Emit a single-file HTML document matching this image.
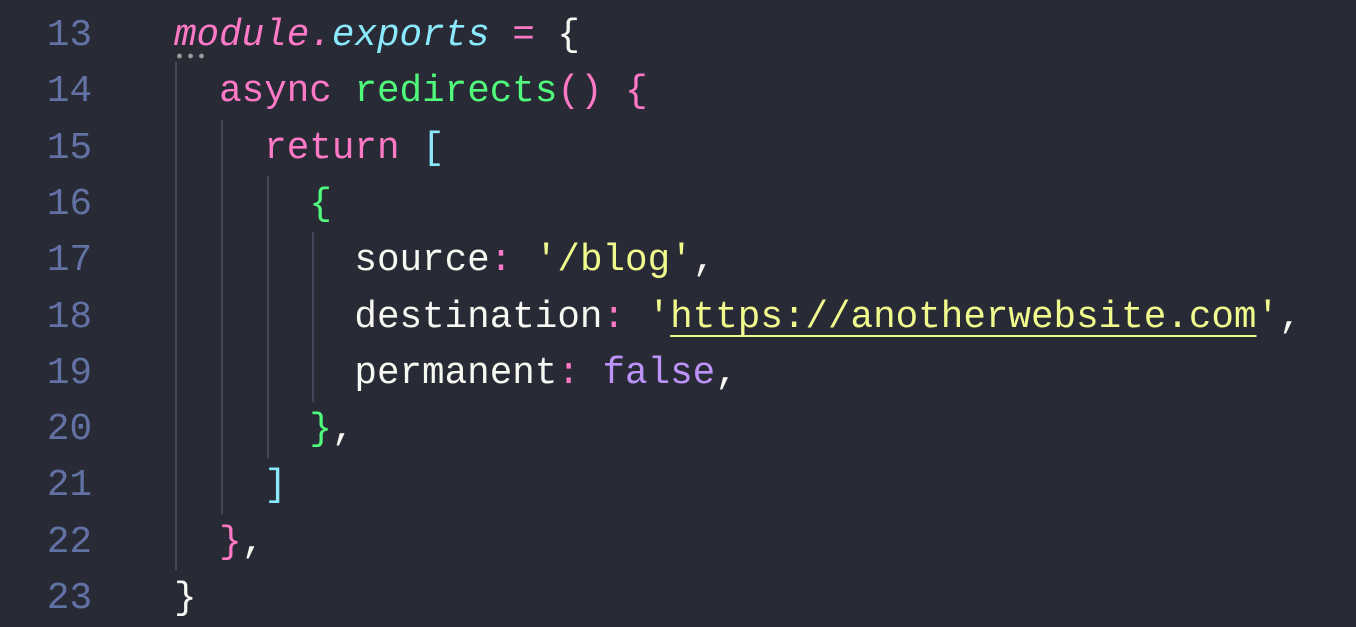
<!DOCTYPE html><html><head><style>
body{margin:0;width:1356px;height:626px;background:#282a36;overflow:hidden;font-family:"Liberation Mono",monospace;}
.l{position:absolute;left:0;height:56.3px;line-height:56.3px;font-size:37.6px;white-space:pre;color:#f8f8f2}
.n{position:absolute;width:92px;text-align:right;color:#6272a4}
.c{position:absolute;left:174px}
.p{color:#ff79c6}.cy{color:#8be9fd}.g{color:#50fa7b}.y{color:#f1fa8c}.pu{color:#bd93f9}
.gd{position:absolute;width:2px;background:#44475a}
</style></head><body>
<div class="gd" style="left:175px;top:62px;height:508px"></div>
<div class="gd" style="left:221px;top:120px;height:394px"></div>
<div class="gd" style="left:267px;top:176px;height:282px"></div>
<div class="gd" style="left:312px;top:232px;height:170px"></div>
<div style="position:absolute;left:174px;top:53px;width:34px;height:6px;background:radial-gradient(circle,#999 2.2px,transparent 2.6px) 0 0/11px 6px"></div>
<div class="l" style="top:8px"><span class="n">13</span><span class="c"><i class="p">module</i><i class="p">.</i><i class="cy">exports</i> <span class="p">=</span> {</span></div>
<div class="l" style="top:64.3px"><span class="n">14</span><span class="c">  <span class="p">async</span> <span class="g">redirects</span><span class="p">()</span> <span class="p">{</span></span></div>
<div class="l" style="top:120.6px"><span class="n">15</span><span class="c">    <span class="p">return</span> <span class="cy">[</span></span></div>
<div class="l" style="top:176.9px"><span class="n">16</span><span class="c">      <span class="g">{</span></span></div>
<div class="l" style="top:233.2px"><span class="n">17</span><span class="c">        source<span class="p">:</span> <span class="y">'/blog'</span>,</span></div>
<div class="l" style="top:289.5px"><span class="n">18</span><span class="c">        destination<span class="p">:</span> <span class="y">'<span style="text-decoration:underline;text-underline-offset:8px;text-decoration-thickness:2px">https://anotherwebsite.com</span>'</span>,</span></div>
<div class="l" style="top:345.8px"><span class="n">19</span><span class="c">        permanent<span class="p">:</span> <span class="pu">false</span>,</span></div>
<div class="l" style="top:402.1px"><span class="n">20</span><span class="c">      <span class="g">}</span>,</span></div>
<div class="l" style="top:458.4px"><span class="n">21</span><span class="c">    <span class="cy">]</span></span></div>
<div class="l" style="top:514.7px"><span class="n">22</span><span class="c">  <span class="p">}</span>,</span></div>
<div class="l" style="top:571px"><span class="n">23</span><span class="c">}</span></div>
</body></html>
